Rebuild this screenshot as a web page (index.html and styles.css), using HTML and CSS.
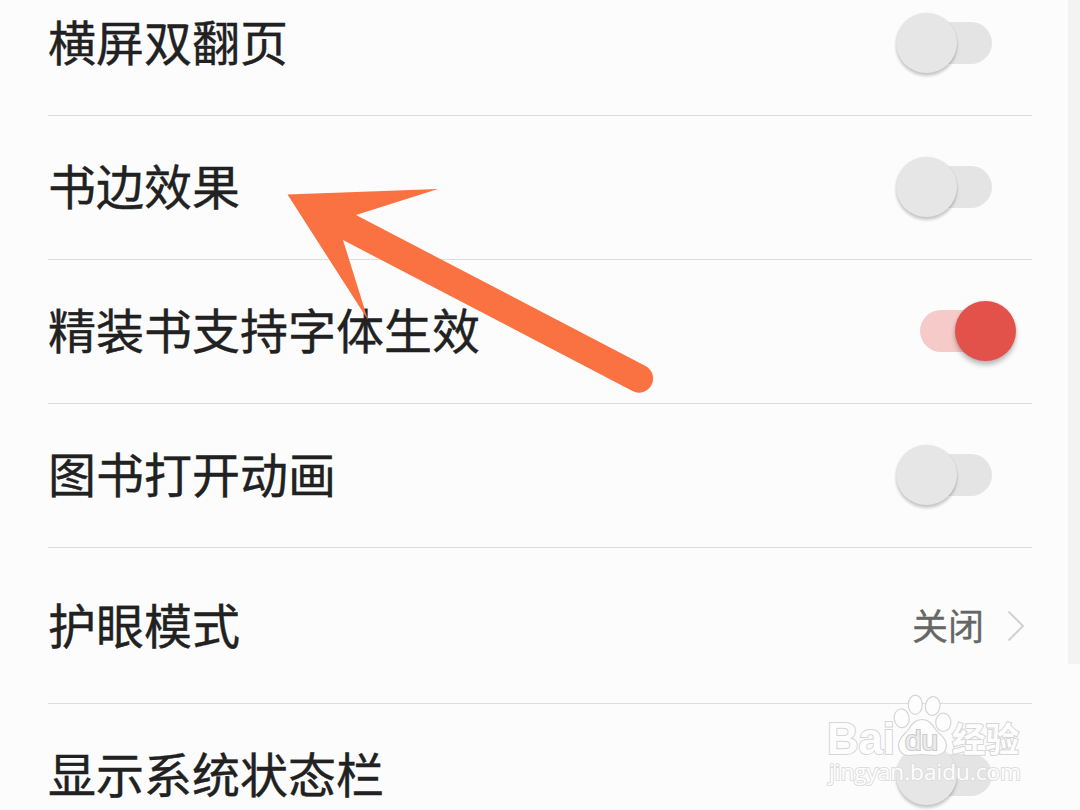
FILE: index.html
```html
<!DOCTYPE html>
<html lang="zh-CN">
<head>
    <meta charset="UTF-8">
    <meta name="viewport" content="width=device-width, initial-scale=1.0">
    <title>阅读设置</title>
    <link rel="stylesheet" href="styles.css">
</head>
<body>
    <div class="page">
        <div class="settings">
            <div class="row">
                <span class="label">横屏双翻页</span>
                <div class="switch"><div class="knob"></div></div>
            </div>
            <div class="row">
                <span class="label">书边效果</span>
                <div class="switch"><div class="knob"></div></div>
            </div>
            <div class="row">
                <span class="label">精装书支持字体生效</span>
                <div class="switch on"><div class="knob"></div></div>
            </div>
            <div class="row">
                <span class="label">图书打开动画</span>
                <div class="switch"><div class="knob"></div></div>
            </div>
            <div class="row row-link">
                <span class="label">护眼模式</span>
                <div class="link-value">
                    <span class="value">关闭</span>
                    <svg class="chevron" width="18" height="32" viewBox="0 0 18 32">
                        <path d="M1.5 1.5L16 16L1.5 30.5" fill="none" stroke="#d2d2d2" stroke-width="2"/>
                    </svg>
                </div>
            </div>
            <div class="row">
                <span class="label">显示系统状态栏</span>
                <div class="switch"><div class="knob"></div></div>
            </div>
        </div>
        <div class="scrollbar"></div>

        <!-- Pointer arrow -->
        <svg class="arrow" width="1080" height="810" viewBox="0 0 1080 810">
            <path d="M287.5 194.5L438 189L356 215L645.5 366A14 14 0 0 1 632.500 391L343 240L368 320Z" fill="#fa7142"/>
        </svg>

        <!-- Watermark -->
        <svg class="watermark" width="210" height="110" viewBox="820 690 210 110">
            <g class="mark">
                <text class="mark-url" x="829" y="780" textLength="192" lengthAdjust="spacingAndGlyphs">jingyan.baidu.com</text>
                <text class="mark-bai" x="827" y="754" textLength="68" lengthAdjust="spacingAndGlyphs">Bai</text>
                <ellipse cx="901.7" cy="718.3" rx="7.5" ry="9.4" transform="rotate(-8 901.7 718.3)"/>
                <ellipse cx="915.3" cy="704.7" rx="7" ry="9.6"/>
                <ellipse cx="932.7" cy="706" rx="7.3" ry="9.4" transform="rotate(8 932.7 706)"/>
                <ellipse cx="943.3" cy="722.3" rx="7.6" ry="9.2"/>
                <path d="M922 719.500C929 719.500 932 724 936 730C940 735 946.500 738 946.500 745C946.500 752 941 755.500 935 755.500C930 755.500 927 754.500 922 754.500C917 754.500 914 755.500 909 755.500C903 755.500 898.500 752 898.500 745C898.500 738 904 735 908 730C912 724 915 719.500 922 719.500Z"/>
                <text class="mark-du" x="905" y="750" textLength="33" lengthAdjust="spacingAndGlyphs">du</text>
                <text class="mark-cn" x="952" y="752" textLength="67" lengthAdjust="spacingAndGlyphs">经验</text>
            </g>
        </svg>
    </div>
</body>
</html>
```
FILE: styles.css
```css
body {
    margin: 0;
    background-color: #fcfcfc;
    font-family: "Noto Sans CJK SC", sans-serif;
    color: #212121;
}

.page {
    position: relative;
    width: 1080px;
    height: 810px;
    overflow: hidden;
    background-color: #fcfcfc;
}

/* list is scrolled, so the first row is cut by the top edge */
.settings {
    margin-top: -28px;
    padding: 0 48px;
}

.row {
    display: flex;
    align-items: center;
    justify-content: space-between;
    box-sizing: border-box;
    height: 144px;
    border-bottom: 1px solid #dedede;
}

.row-link {
    height: 156px;
}

.label {
    padding-bottom: 8px;
    font-size: 48px;
    line-height: 72px;
    -webkit-text-stroke: 0.4px #212121;
}

.row-link .label {
    padding-bottom: 6px;
}

.switch {
    position: relative;
    width: 72px;
    height: 42px;
    margin-right: 40px;
    margin-bottom: 2px;
    border-radius: 21px;
    background-color: #e4e4e4;
}

.knob {
    position: absolute;
    top: -9px;
    left: -24px;
    width: 61px;
    height: 60px;
    border-radius: 50%;
    background-color: #e6e6e6;
    box-shadow: 0 3px 3px rgba(0, 0, 0, 0.2), 0 0 2px rgba(0, 0, 0, 0.08);
}

.switch.on {
    background-color: #f6cac8;
}

.switch.on .knob {
    left: 35px;
    background-color: #e2524b;
    box-shadow: 0 4px 5px rgba(0, 0, 0, 0.25), 0 0 3px rgba(0, 0, 0, 0.1);
}

.link-value {
    display: flex;
    align-items: center;
    gap: 23px;
    margin-right: 7px;
}

.value {
    padding-bottom: 3px;
    font-size: 36px;
    line-height: 54px;
    color: #666;
    -webkit-text-stroke: 0.3px #666;
}

.scrollbar {
    position: absolute;
    top: 0;
    right: 0;
    width: 12px;
    height: 664px;
    background-color: #f3f3f3;
}

.arrow {
    position: absolute;
    top: 0;
    left: 0;
}

.watermark {
    position: absolute;
    top: 690px;
    left: 820px;
}

.mark {
    fill: #fdfdfd;
    stroke: #d6d6d6;
    stroke-width: 1.2;
}

.mark text {
    paint-order: stroke;
    stroke-width: 2;
}

.mark-bai {
    font-family: "Liberation Sans", sans-serif;
    font-size: 44px;
    font-weight: bold;
}

.mark .mark-du {
    font-family: "Liberation Sans", sans-serif;
    font-size: 27px;
    fill: #ececec;
    stroke: #cacaca;
}

.mark-cn {
    font-size: 34px;
    font-weight: bold;
}

.mark .mark-url {
    font-family: "Open Sans", sans-serif;
    font-size: 22px;
    stroke: #dedede;
}
```
